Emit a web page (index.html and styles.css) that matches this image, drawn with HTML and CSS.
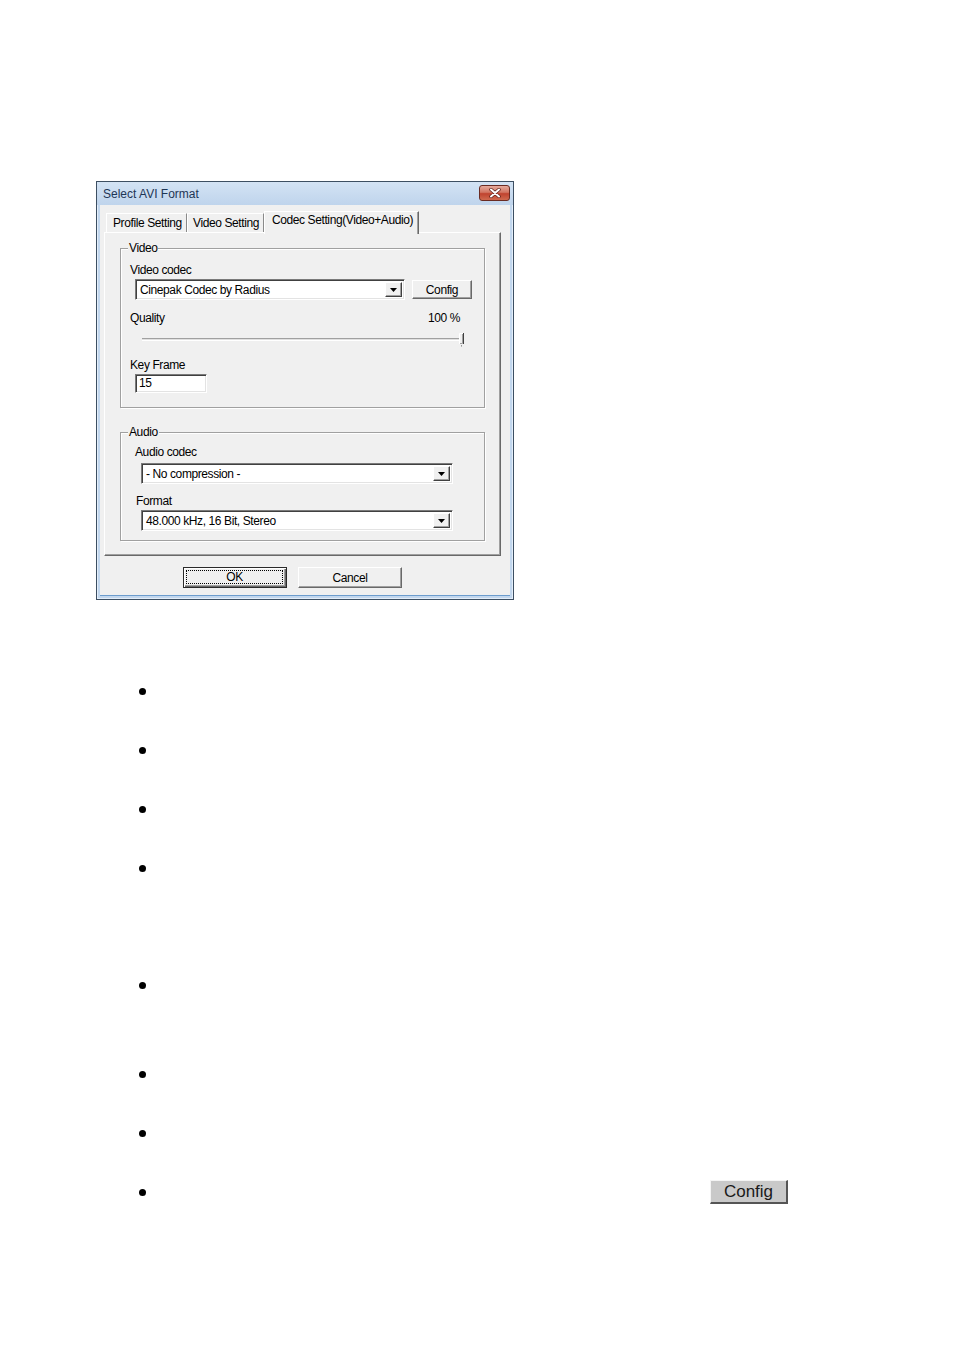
FILE: index.html
```html
<!DOCTYPE html>
<html>
<head>
<meta charset="utf-8">
<title>Select AVI Format</title>
<link rel="stylesheet" href="styles.css">
</head>
<body>
<div class="page">
  <div class="dialog">
    <div class="titlebar">
      <span class="title">Select AVI Format</span>
      <span class="close">
        <svg width="12" height="10" viewBox="0 0 12 10">
          <path d="M2 1.5 L10 8.5 M10 1.5 L2 8.5" stroke="#5a1f18" stroke-width="3.4" stroke-linecap="round"/>
          <path d="M2 1.5 L10 8.5 M10 1.5 L2 8.5" stroke="#ffffff" stroke-width="2" stroke-linecap="round"/>
        </svg>
      </span>
    </div>
    <div class="client">
      <div class="tabs">
        <div class="tab t1">Profile Setting</div>
        <div class="tab t2">Video Setting</div>
        <div class="tab active">Codec Setting(Video+Audio)</div>
      </div>
      <div class="panel">
        <div class="group video">
          <span class="legend">Video</span>
          <div class="lbl l-vcodec">Video codec</div>
          <div class="combo-row">
            <div class="combo c-video">
              <span class="val">Cinepak Codec by Radius</span>
              <span class="drop"><svg width="7" height="4" viewBox="0 0 7 4"><path d="M0 0 H7 L3.5 4 Z" fill="#000"/></svg></span>
            </div>
            <div class="btn config">Config</div>
          </div>
          <div class="lbl quality"><span>Quality</span><span>100 %</span></div>
          <div class="slider">
            <div class="track"></div>
            <div class="thumb">
              <svg width="6" height="14" viewBox="0 0 6 14">
                <rect x="0" y="0" width="5" height="11" fill="#f0f0f0"/>
                <path d="M0.5 11 V0.5 H4" stroke="#ffffff" stroke-width="1" fill="none"/>
                <path d="M4.5 0 V11" stroke="#404040" stroke-width="1"/>
                <path d="M3.5 1 V10.5 H1" stroke="#a0a0a0" stroke-width="1" fill="none"/>
                <path d="M2.5 12 V12.8 M2.5 13.5 V14" stroke="#808080" stroke-width="1"/>
              </svg>
            </div>
          </div>
          <div class="lbl l-key">Key Frame</div>
          <div class="edit">15</div>
        </div>
        <div class="group audio">
          <span class="legend">Audio</span>
          <div class="lbl l-acodec">Audio codec</div>
          <div class="combo c-audio">
            <span class="val">- No compression -</span>
            <span class="drop"><svg width="7" height="4" viewBox="0 0 7 4"><path d="M0 0 H7 L3.5 4 Z" fill="#000"/></svg></span>
          </div>
          <div class="lbl l-format">Format</div>
          <div class="combo c-format">
            <span class="val">48.000 kHz, 16 Bit, Stereo</span>
            <span class="drop"><svg width="7" height="4" viewBox="0 0 7 4"><path d="M0 0 H7 L3.5 4 Z" fill="#000"/></svg></span>
          </div>
        </div>
      </div>
      <div class="buttons">
        <div class="btn ok"><span class="focus">OK</span></div>
        <div class="btn cancel">Cancel</div>
      </div>
    </div>
  </div>

  <ul class="bullets">
    <li class="item"><span class="line"><span class="dot"></span></span></li>
    <li class="item"><span class="line"><span class="dot"></span></span></li>
    <li class="item"><span class="line"><span class="dot"></span></span></li>
    <li class="item tall"><span class="line"><span class="dot"></span></span></li>
    <li class="item mid"><span class="line"><span class="dot"></span></span></li>
    <li class="item"><span class="line"><span class="dot"></span></span></li>
    <li class="item"><span class="line"><span class="dot"></span></span></li>
    <li class="item last"><span class="line"><span class="dot"></span><span class="big-config">Config</span></span></li>
  </ul>
</div>
</body>
</html>
```

FILE: styles.css
```css
html, body {
  margin: 0;
  padding: 0;
  background: #ffffff;
}

.page {
  padding-top: 181px;
  font-family: "Liberation Sans", Arial, sans-serif;
}

/* ---------- dialog window ---------- */
.dialog {
  box-sizing: border-box;
  width: 418px;
  height: 419px;
  margin-left: 96px;
  border: 1px solid #3d4f62;
  background: #c2d7ee;
  box-shadow: inset 0 0 0 1px #e3eefa;
  display: flex;
  flex-direction: column;
}

.titlebar {
  height: 23px;
  flex: none;
  display: flex;
  align-items: center;
  justify-content: space-between;
  padding-left: 6px;
  padding-right: 3px;
  background: linear-gradient(#d3e3f4, #bfd4ec);
}

.title {
  font-size: 12px;
  color: #1e3656;
  line-height: 14px;
}

.close {
  box-sizing: border-box;
  width: 31px;
  height: 16px;
  margin-top: -2px;
  border: 1px solid #6a2b22;
  border-radius: 3px;
  background: linear-gradient(#e6aa9c 0%, #d27562 45%, #c0432f 55%, #cf6a4f 100%);
  display: flex;
  align-items: center;
  justify-content: center;
}

.client {
  flex: 1;
  margin: 0 3px 3px 3px;
  background: #f0f0f0;
  padding-left: 4px;
  font-size: 12px;
  letter-spacing: -0.4px;
  color: #000;
  border-bottom: 1px solid #6c9ccd;
}

/* ---------- tabs ---------- */
.tabs {
  height: 27px;
  display: flex;
  align-items: flex-end;
  padding-left: 2px;
}

.tab {
  box-sizing: border-box;
  height: 19px;
  padding-top: 2px;
  line-height: 14px;
  white-space: nowrap;
  background: #f0f0f0;
  border-top: 1px solid #ffffff;
  border-left: 1px solid #ffffff;
  border-right: 1px solid #8a8a8a;
}

.t1 { width: 81px; padding-left: 6px; }
.t2 { width: 77px; padding-left: 5px; }

.tab.active {
  position: relative;
  z-index: 1;
  width: 155px;
  height: 23px;
  margin-bottom: -2px;
  padding-left: 7px;
  padding-top: 1px;
  border-right: 1px solid #696969;
  box-shadow: inset -1px 0 0 #a0a0a0;
}

/* ---------- panel ---------- */
.panel {
  box-sizing: border-box;
  width: 397px;
  height: 324px;
  border-top: 1px solid #ffffff;
  border-left: 1px solid #ffffff;
  border-right: 1px solid #696969;
  border-bottom: 1px solid #696969;
  box-shadow: inset -1px -1px 0 #a0a0a0;
  padding-top: 15px;
  padding-left: 15px;
}

.group {
  box-sizing: border-box;
  width: 365px;
  border: 1px solid #a0a0a0;
  box-shadow: inset 1px 1px 0 #ffffff, 1px 1px 0 #ffffff;
  padding-left: 9px;
}

.group.video { height: 160px; }
.group.audio { height: 109px; margin-top: 24px; }

.legend {
  display: block;
  width: fit-content;
  margin-top: -8px;
  margin-left: -2px;
  padding: 0 1px;
  line-height: 14px;
  height: 14px;
  background: #f0f0f0;
}

.lbl {
  line-height: 14px;
  height: 14px;
  white-space: nowrap;
}

.l-vcodec { margin-top: 8px; }

.combo-row {
  display: flex;
  align-items: center;
  margin-top: 2px;
}

.combo {
  box-sizing: border-box;
  height: 21px;
  background: #ffffff;
  border-style: solid;
  border-width: 1px;
  border-color: #7a7a7a #ffffff #ffffff #7a7a7a;
  box-shadow: inset 1px 1px 0 #404040, inset -1px -1px 0 #e3e3e3;
  display: flex;
  align-items: center;
  padding: 2px 2px 2px 4px;
}

.combo .val {
  flex: 1;
  white-space: nowrap;
  line-height: 14px;
}

.drop {
  box-sizing: border-box;
  width: 17px;
  height: 15px;
  background: #f0f0f0;
  border-style: solid;
  border-width: 1px;
  border-color: #ffffff #404040 #404040 #ffffff;
  box-shadow: inset -1px -1px 0 #a0a0a0;
  display: flex;
  align-items: center;
  justify-content: center;
}

.c-video { width: 270px; margin-left: 5px; }

.btn {
  box-sizing: border-box;
  background: #f0f0f0;
  border-style: solid;
  border-width: 1px;
  border-color: #ffffff #696969 #696969 #ffffff;
  box-shadow: inset -1px -1px 0 #a0a0a0;
  display: flex;
  align-items: center;
  justify-content: center;
  line-height: 14px;
}

.config {
  width: 60px;
  height: 19px;
  margin-left: 7px;
}

.quality {
  margin-top: 11px;
  width: 330px;
  display: flex;
  justify-content: space-between;
}

.slider {
  margin-top: 8px;
  margin-left: 12px;
  width: 323px;
  height: 14px;
  display: flex;
  align-items: flex-start;
}

.track {
  flex: 1;
  margin-top: 5px;
  height: 1px;
  border-top: 1px solid #a0a0a0;
  border-bottom: 1px solid #ffffff;
  background: #e0e0e0;
  margin-right: -2px;
}

.thumb {
  width: 6px;
  height: 14px;
  display: flex;
}

.l-key { margin-top: 11px; }

.edit {
  box-sizing: border-box;
  width: 72px;
  height: 19px;
  margin-top: 2px;
  margin-left: 5px;
  background: #ffffff;
  border-style: solid;
  border-width: 1px;
  border-color: #7a7a7a #ffffff #ffffff #7a7a7a;
  box-shadow: inset 1px 1px 0 #404040, inset -1px -1px 0 #e3e3e3;
  padding-left: 3px;
  line-height: 16px;
}

.l-acodec { margin-top: 6px; margin-left: 5px; }
.c-audio { width: 312px; margin-left: 11px; margin-top: 4px; }
.l-format { margin-top: 10px; margin-left: 6px; }
.c-format { width: 312px; margin-left: 11px; margin-top: 2px; }

.buttons {
  display: flex;
  margin-top: 11px;
  padding-left: 79px;
}

.ok, .cancel {
  width: 104px;
  height: 21px;
}

.ok {
  border: 1px solid #2a2a2a;
  box-shadow: inset 1px 1px 0 #ffffff, inset -1px -1px 0 #696969, inset -2px -2px 0 #a0a0a0;
  padding: 2px 3px 3px 2px;
  align-items: stretch;
}

.ok .focus {
  flex: 1;
  border: 1px dotted #000;
  display: flex;
  align-items: center;
  justify-content: center;
}

.cancel { margin-left: 11px; }

/* ---------- bullet list ---------- */
.bullets {
  list-style: none;
  margin: 79px 0 0 0;
  padding: 0 0 0 139px;
}

.item {
  height: 59px;
  display: flex;
  align-items: flex-start;
}

.item.tall { height: 117px; }
.item.mid { height: 89px; }
.item.last { height: 24px; }

.line {
  height: 24px;
  display: flex;
  align-items: center;
}

.dot {
  width: 7px;
  height: 7px;
  border-radius: 50%;
  background: #000;
}

.big-config {
  box-sizing: border-box;
  margin-left: 564px;
  width: 78px;
  height: 24px;
  background: #c9c9c9;
  border-style: solid;
  border-width: 1px 2px 2px 1px;
  border-color: #f4f4f4 #555555 #555555 #f4f4f4;
  font-size: 17px;
  color: #1a1a1a;
  display: flex;
  align-items: center;
  justify-content: center;
  line-height: 20px;
}
```
